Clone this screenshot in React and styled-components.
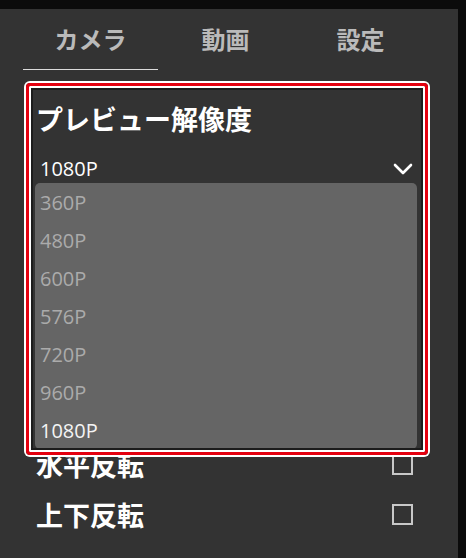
import styled, { createGlobalStyle } from 'styled-components';

const GlobalStyle = createGlobalStyle`
  html, body {
    margin: 0;
    padding: 0;
    background: #0b0b0b;
  }
  body {
    font-family: "Noto Sans CJK JP", "Open Sans", sans-serif;
  }
`;

const tabs = ['カメラ', '動画', '設定'];
const options = ['360P', '480P', '600P', '576P', '720P', '960P', '1080P'];

const App = () => {
  return (
    <>
      <GlobalStyle />
      <StyledPage>
        <StyledPanel>
          <TabBar>
            {tabs.map((t, i) => (
              <Tab key={t} active={i === 0}>{t}</Tab>
            ))}
          </TabBar>

          <Content>
            <SectionTitle>プレビュー解像度</SectionTitle>
            <SelectWrap>
              <SelectBox>
                <span>1080P</span>
                <svg width="20" height="12" viewBox="0 0 20 12">
                  <polyline points="2,2 10,10 18,2" fill="none" stroke="#fff" strokeWidth="2.6" strokeLinecap="round" strokeLinejoin="round" />
                </svg>
              </SelectBox>
              <OptionList>
                {options.map(o => (
                  <OptionItem key={o} selected={o === '1080P'}>{o}</OptionItem>
                ))}
              </OptionList>
            </SelectWrap>

            <Rows>
              <SettingRow>
                <RowLabel>水平反転</RowLabel>
                <Checkbox />
              </SettingRow>
              <SettingRow>
                <RowLabel>上下反転</RowLabel>
                <Checkbox />
              </SettingRow>
            </Rows>
          </Content>

          <Highlight />
        </StyledPanel>
      </StyledPage>
    </>
  );
}

const StyledPage = styled.div`
  width: 466px;
  height: 558px;
  padding-top: 9px;
  box-sizing: border-box;
  overflow: hidden;
`;

const StyledPanel = styled.div`
  position: relative;
  width: 458px;
  height: 549px;
  background: #333333;
  padding-left: 23px;
  box-sizing: border-box;
`;

const TabBar = styled.div`
  display: flex;
  height: 61px;
`;

const Tab = styled.div`
  width: 135px;
  display: flex;
  align-items: center;
  justify-content: center;
  font-size: 24px;
  font-weight: 700;
  color: #bababa;
  border-bottom: 1.5px solid ${props => props.active ? '#dcdcdc' : 'transparent'};
  box-sizing: border-box;
  padding-bottom: 1px;
`;

const Content = styled.div`
  padding: 0 45px 0 13px;
`;

const SectionTitle = styled.div`
  margin-top: 31px;
  height: 36px;
  line-height: 36px;
  font-size: 27px;
  font-weight: 700;
  color: #ffffff;
`;

const SelectWrap = styled.div`
  position: relative;
  margin-top: 14px;
`;

const SelectBox = styled.div`
  height: 32px;
  display: flex;
  align-items: center;
  justify-content: space-between;
  padding: 2px 0 0 4px;
  box-sizing: border-box;
  font-family: "Open Sans", sans-serif;
  font-size: 20px;
  color: #ffffff;

  svg {
    margin-top: 2px;
  }
`;

const OptionList = styled.div`
  position: absolute;
  top: 100%;
  left: -1px;
  right: -4px;
  background: #656565;
  border-radius: 5px;
  z-index: 2;
`;

const OptionItem = styled.div`
  height: 38px;
  display: flex;
  align-items: center;
  padding-left: 5px;
  font-family: "Open Sans", sans-serif;
  font-size: 20px;
  color: ${props => props.selected ? '#f4f4f4' : '#ababab'};
`;

const Rows = styled.div`
  margin-top: 256px;
`;

const SettingRow = styled.div`
  height: 50px;
  display: flex;
  align-items: center;
  justify-content: space-between;
`;

const RowLabel = styled.div`
  font-size: 27px;
  font-weight: 700;
  color: #ffffff;
`;

const Checkbox = styled.div`
  width: 21px;
  height: 21px;
  border: 2.5px solid #c8c8c8;
  box-sizing: border-box;
`;

// screenshot annotation frame drawn over the dropdown
const Highlight = styled.div`
  position: absolute;
  left: 26px;
  top: 74px;
  width: 402px;
  height: 372px;
  border: 3.5px solid #e4000f;
  border-radius: 4px;
  box-sizing: border-box;
  box-shadow: 0 0 0 2px #ffffff, inset 0 0 0 2px #ffffff, inset 0 0 0 4px #1c1c1c;
  z-index: 3;
  pointer-events: none;
`;

export default App;
